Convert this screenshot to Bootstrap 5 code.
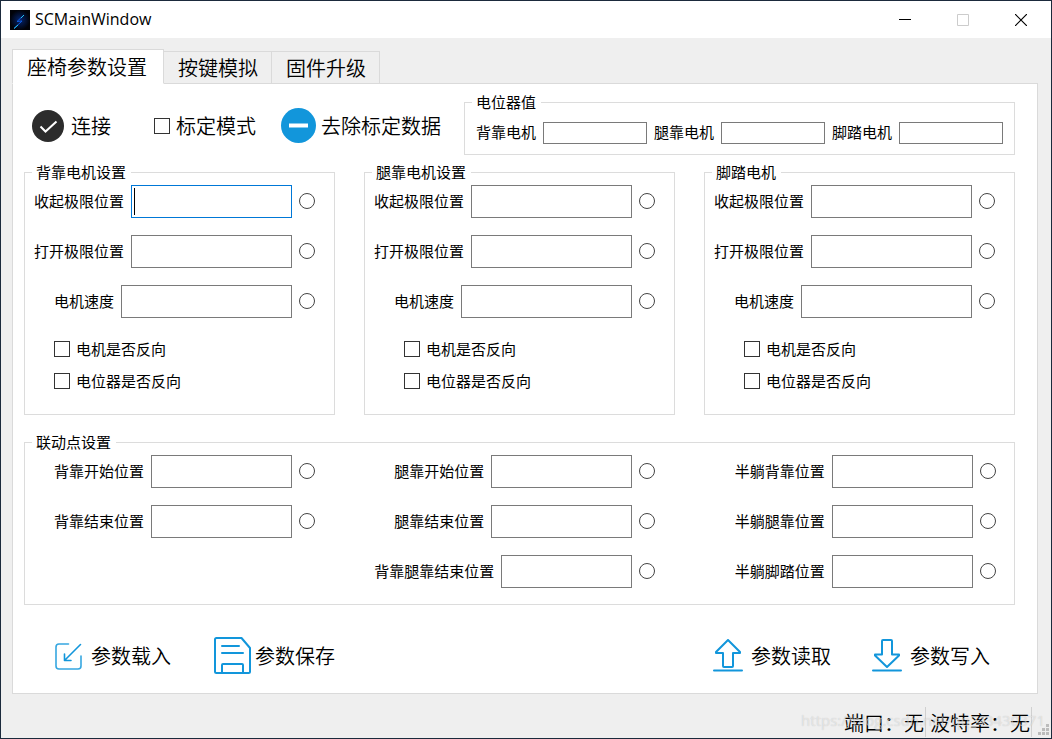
<!DOCTYPE html>
<html lang="zh-CN">
<head>
<meta charset="utf-8">
<meta name="viewport" content="width=device-width, initial-scale=1">
<title>SCMainWindow</title>
<link href="https://cdn.jsdelivr.net/npm/bootstrap@5.3.0/dist/css/bootstrap.min.css" rel="stylesheet">
<style>
  body { font: 400 15px/20px "Noto Sans CJK SC", sans-serif; color: #000; background: #efefef; }
  .app-window { border: 1px solid #1b2a3c; }
  .title-bar { height: 37px; background: #fff; padding-left: 9px; }
  .title-text { font: 400 16px/20px "Open Sans", sans-serif; margin: 0 0 2px 5px; }
  .win-controls { margin-right: 1px; }
  .win-btn { width: 58px; height: 35px; border: 0; background: none; padding: 0; display: flex; align-items: center; justify-content: center; }
  .big-text { font-size: 20px; line-height: 30px; font-weight: 350; }

  .main-area { padding: 11px 13px 0 11px; }
  .nav-tabs { --bs-nav-tabs-border-color: #dadada; --bs-nav-tabs-border-radius: 0; align-items: flex-end; }
  .nav-tabs .nav-link { color: #000; background: #efefef; border: 1px solid #dadada; border-left-width: 0; font-size: 20px; font-weight: 350; line-height: 31px; padding: 0 13px 0 14px; }
  .nav-tabs .nav-link:hover { border-color: #dadada; }
  .nav-tabs .nav-link.active { color: #000; background: #fff; border: 1px solid #dadada; border-bottom-color: #fff; line-height: 33px; padding: 0 16px 0 14px; }
  .panel { background: #fff; border: 1px solid #dadada; border-top: 0; padding: 8px 22px 18px 11px; }

  fieldset.group-box { border: 1px solid #dcdcdc; }
  .group-box legend { float: none; width: auto; font-size: 15px; line-height: 20px; margin: 0 0 0 7px; padding: 0 5px 0 4px; }
  .tool-btn { border: 0; background: none; padding: 0; color: #000; font-weight: 350; display: inline-flex; align-items: center; white-space: nowrap; }

  .top-row { margin-bottom: 7px; }
  .top-tools { padding: 4px 23px 0 8px; }
  .pot-row { padding: 10px 11px 10px 11px; gap: 7px; }
  .text-field { border: 1px solid #7a7a7a; border-radius: 0; padding: 0 4px; min-width: 0; width: 100%; flex: 1 1 0; height: 33px; font-size: 15px; background: #fff; outline: 0; }
  .text-field.short-field { height: 22px; }
  .text-field.current-field { border-color: #0078d7; background: linear-gradient(#000, #000) 2px 2px / 1px 27px no-repeat #fff; }
  .row-label { white-space: nowrap; margin: 0 7px 2px 0; }

  .tri-grid { display: grid; grid-template-columns: repeat(3, minmax(0, 1fr)); gap: 29px; }
  .motor-body { padding: 3px 19px 17px 9px; }
  .field-stack { display: flex; flex-direction: column; gap: 17px; }
  .field-row { display: flex; align-items: center; }
  .inset-row { padding-left: 20px; }
  .check-stack { padding: 15px 0 0 20px; }
  .check-stack.wide-inset { padding-left: 30px; }
  .check-row { height: 32px; display: flex; align-items: center; }
  .form-check-input.box-input, .form-check-input.ring-input { width: 16px; height: 16px; margin: 0; flex: none; border: 1px solid #333; background-color: #fff; border-radius: 0; }
  .form-check-input.ring-input { border-radius: 50%; margin: 0 0 2px 7px; border-color: #444; }
  .check-row label { padding-left: 6px; }
  .link-box { margin-top: 17px; }
  .link-body { padding: 3px 0 16px; }
  .link-col { padding: 0 20px 0 9px; }
  .link-col.mid-col { padding-left: 10px; }
  .link-col.last-col { padding: 0 18px 0 11px; }

  .actions { margin-top: 32px; height: 38px; padding: 0 25px 0 31px; }
  .status-bar { height: 44px; padding: 0 2px 0 0; }
  .status-cell { border-right: 1px solid #d0d0d0; line-height: 28px; font-size: 20px; font-weight: 350; padding: 2px 1px 0 4px; margin-top: 13px; white-space: nowrap; }
  .grip { margin: 30px 0 0 6px; }
  .watermark { position: absolute; right: 6px; bottom: 8px; font: 400 15px/20px "Open Sans", sans-serif; color: rgba(255,255,255,.5); text-shadow: 0 0 1px rgba(0,0,0,.2); pointer-events: none; white-space: nowrap; }
</style>
</head>
<body>
<div class="app-window d-flex flex-column min-vh-100 position-relative">
  <header class="title-bar d-flex align-items-center">
    <svg width="20" height="20" viewBox="0 0 20 20" aria-hidden="true">
      <defs><radialGradient id="glow"><stop offset="0" stop-color="#05246e"/><stop offset="1" stop-color="#010208"/></radialGradient></defs>
      <rect width="20" height="20" fill="url(#glow)"/>
      <path d="M14 5 7 11.500 12 11 4 18.500" fill="none" stroke="#0d5be0" stroke-width="1"/>
      <path d="M14 5 11 8M8 15 4 18.500" stroke="#22c4f5" stroke-width="1"/>
    </svg>
    <span class="title-text">SCMainWindow</span>
    <div class="win-controls ms-auto d-flex">
      <button type="button" class="win-btn" aria-label="最小化"><svg width="12" height="12"><path d="M0 5.500H12" stroke="#000"/></svg></button>
      <button type="button" class="win-btn" aria-label="最大化" disabled><svg width="12" height="12"><path d="M.5.5h11v11H.5z" fill="none" stroke="#ccc"/></svg></button>
      <button type="button" class="win-btn" aria-label="关闭"><svg width="12" height="12"><path d="M0 0 12 12M12 0 0 12" stroke="#000" stroke-width="1.200"/></svg></button>
    </div>
  </header>

  <main class="main-area flex-grow-1 d-flex flex-column">
    <ul class="nav nav-tabs" role="tablist">
      <li class="nav-item"><button type="button" class="nav-link active" role="tab" aria-selected="true">座椅参数设置</button></li>
      <li class="nav-item"><button type="button" class="nav-link" role="tab">按键模拟</button></li>
      <li class="nav-item"><button type="button" class="nav-link" role="tab">固件升级</button></li>
    </ul>

    <div class="panel flex-grow-1">
      <div class="top-row d-flex">
        <div class="top-tools big-text d-flex align-items-center">
          <button type="button" class="tool-btn">
            <svg width="32" height="32" viewBox="0 0 32 32" aria-hidden="true"><circle cx="16" cy="16" r="16" fill="#2c2c2c"/><path d="m8.500 16.500 5 5L24.500 11.500" fill="none" stroke="#fff" stroke-width="2"/></svg>
            <span style="margin-left:7px">连接</span>
          </button>
          <input class="form-check-input box-input" type="checkbox" id="calib" style="margin-left:43px">
          <label for="calib" class="text-nowrap" style="margin:0 25px 0 6px">标定模式</label>
          <button type="button" class="tool-btn">
            <svg width="35" height="35" viewBox="0 0 35 35" aria-hidden="true"><circle cx="17.500" cy="17.500" r="17.500" fill="#1296db"/><path d="M8 17.500H27" stroke="#fff" stroke-width="4"/></svg>
            <span style="margin-left:5px">去除标定数据</span>
          </button>
        </div>
        <fieldset class="group-box flex-grow-1">
          <legend>电位器值</legend>
          <div class="pot-row d-flex">
            <div class="field-row flex-fill"><label class="row-label" for="p1">背靠电机</label><input id="p1" type="text" class="text-field short-field"></div>
            <div class="field-row flex-fill"><label class="row-label" for="p2">腿靠电机</label><input id="p2" type="text" class="text-field short-field"></div>
            <div class="field-row flex-fill"><label class="row-label" for="p3">脚踏电机</label><input id="p3" type="text" class="text-field short-field"></div>
          </div>
        </fieldset>
      </div>

      <div class="tri-grid">
        <fieldset class="group-box">
          <legend>背靠电机设置</legend>
          <div class="motor-body">
            <div class="field-stack">
              <div class="field-row"><label class="row-label" for="a1">收起极限位置</label><input id="a1" type="text" class="text-field current-field"><input type="radio" class="form-check-input ring-input" name="ra1" aria-label="收起极限位置"></div>
              <div class="field-row"><label class="row-label" for="a2">打开极限位置</label><input id="a2" type="text" class="text-field"><input type="radio" class="form-check-input ring-input" name="ra2" aria-label="打开极限位置"></div>
              <div class="field-row inset-row"><label class="row-label" for="a3">电机速度</label><input id="a3" type="text" class="text-field"><input type="radio" class="form-check-input ring-input" name="ra3" aria-label="电机速度"></div>
            </div>
            <div class="check-stack">
              <div class="check-row"><input class="form-check-input box-input" type="checkbox" id="a4"><label for="a4">电机是否反向</label></div>
              <div class="check-row"><input class="form-check-input box-input" type="checkbox" id="a5"><label for="a5">电位器是否反向</label></div>
            </div>
          </div>
        </fieldset>
        <fieldset class="group-box">
          <legend>腿靠电机设置</legend>
          <div class="motor-body">
            <div class="field-stack">
              <div class="field-row"><label class="row-label" for="b1">收起极限位置</label><input id="b1" type="text" class="text-field"><input type="radio" class="form-check-input ring-input" name="rb1" aria-label="收起极限位置"></div>
              <div class="field-row"><label class="row-label" for="b2">打开极限位置</label><input id="b2" type="text" class="text-field"><input type="radio" class="form-check-input ring-input" name="rb2" aria-label="打开极限位置"></div>
              <div class="field-row inset-row"><label class="row-label" for="b3">电机速度</label><input id="b3" type="text" class="text-field"><input type="radio" class="form-check-input ring-input" name="rb3" aria-label="电机速度"></div>
            </div>
            <div class="check-stack wide-inset">
              <div class="check-row"><input class="form-check-input box-input" type="checkbox" id="b4"><label for="b4">电机是否反向</label></div>
              <div class="check-row"><input class="form-check-input box-input" type="checkbox" id="b5"><label for="b5">电位器是否反向</label></div>
            </div>
          </div>
        </fieldset>
        <fieldset class="group-box">
          <legend>脚踏电机</legend>
          <div class="motor-body">
            <div class="field-stack">
              <div class="field-row"><label class="row-label" for="c1">收起极限位置</label><input id="c1" type="text" class="text-field"><input type="radio" class="form-check-input ring-input" name="rc1" aria-label="收起极限位置"></div>
              <div class="field-row"><label class="row-label" for="c2">打开极限位置</label><input id="c2" type="text" class="text-field"><input type="radio" class="form-check-input ring-input" name="rc2" aria-label="打开极限位置"></div>
              <div class="field-row inset-row"><label class="row-label" for="c3">电机速度</label><input id="c3" type="text" class="text-field"><input type="radio" class="form-check-input ring-input" name="rc3" aria-label="电机速度"></div>
            </div>
            <div class="check-stack wide-inset">
              <div class="check-row"><input class="form-check-input box-input" type="checkbox" id="c4"><label for="c4">电机是否反向</label></div>
              <div class="check-row"><input class="form-check-input box-input" type="checkbox" id="c5"><label for="c5">电位器是否反向</label></div>
            </div>
          </div>
        </fieldset>
      </div>

      <fieldset class="group-box link-box">
        <legend>联动点设置</legend>
        <div class="tri-grid link-body">
          <div class="field-stack link-col">
            <div class="field-row inset-row"><label class="row-label" for="d1">背靠开始位置</label><input id="d1" type="text" class="text-field"><input type="radio" class="form-check-input ring-input" name="rd1" aria-label="背靠开始位置"></div>
            <div class="field-row inset-row"><label class="row-label" for="d2">背靠结束位置</label><input id="d2" type="text" class="text-field"><input type="radio" class="form-check-input ring-input" name="rd2" aria-label="背靠结束位置"></div>
          </div>
          <div class="field-stack link-col mid-col">
            <div class="field-row inset-row"><label class="row-label" for="e1">腿靠开始位置</label><input id="e1" type="text" class="text-field"><input type="radio" class="form-check-input ring-input" name="re1" aria-label="腿靠开始位置"></div>
            <div class="field-row inset-row"><label class="row-label" for="e2">腿靠结束位置</label><input id="e2" type="text" class="text-field"><input type="radio" class="form-check-input ring-input" name="re2" aria-label="腿靠结束位置"></div>
            <div class="field-row"><label class="row-label" for="e3">背靠腿靠结束位置</label><input id="e3" type="text" class="text-field"><input type="radio" class="form-check-input ring-input" name="re3" aria-label="背靠腿靠结束位置"></div>
          </div>
          <div class="field-stack link-col last-col">
            <div class="field-row inset-row"><label class="row-label" for="f1">半躺背靠位置</label><input id="f1" type="text" class="text-field"><input type="radio" class="form-check-input ring-input" name="rf1" aria-label="半躺背靠位置"></div>
            <div class="field-row inset-row"><label class="row-label" for="f2">半躺腿靠位置</label><input id="f2" type="text" class="text-field"><input type="radio" class="form-check-input ring-input" name="rf2" aria-label="半躺腿靠位置"></div>
            <div class="field-row inset-row"><label class="row-label" for="f3">半躺脚踏位置</label><input id="f3" type="text" class="text-field"><input type="radio" class="form-check-input ring-input" name="rf3" aria-label="半躺脚踏位置"></div>
          </div>
        </div>
      </fieldset>

      <div class="actions big-text d-flex justify-content-between align-items-center">
        <div class="d-flex align-items-center" style="gap:43px">
          <button type="button" class="tool-btn" style="gap:9px">
            <svg width="27" height="27" viewBox="0 0 27 27" fill="none" stroke="#1296db" stroke-width="1.600" stroke-linecap="round" stroke-linejoin="round" aria-hidden="true"><path d="M13.500 1H4Q1 1 1 4V23Q1 26 4 26H23Q26 26 26 23V13" opacity=".85"/><path d="M25.500 1.500 9.500 17.500M9.500 11V17.500H16"/></svg>
            <span>参数载入</span>
          </button>
          <button type="button" class="tool-btn" style="gap:4px">
            <svg width="37" height="38" viewBox="0 0 37 38" fill="none" stroke="#1296db" stroke-width="2" stroke-linecap="round" stroke-linejoin="round" aria-hidden="true"><path d="M2.500 1H27.500L36 11V34.500Q36 36 34.500 36H2.500Q1 36 1 34.500V2.500Q1 1 2.500 1ZM8 36V28Q8 27 9 27H28Q29 27 29 28V36M8 9H25M8 16H29"/></svg>
            <span>参数保存</span>
          </button>
        </div>
        <div class="d-flex align-items-center" style="gap:41px">
          <button type="button" class="tool-btn" style="gap:8px">
            <svg width="30" height="34" viewBox="0 0 30 34" fill="none" stroke="#1296db" stroke-width="2" stroke-linecap="round" stroke-linejoin="round" aria-hidden="true"><path d="M1 31.500H29M15 1 3 13V14H10V27Q10 28 11 28H19Q20 28 20 27V14H27V13Z"/></svg>
            <span>参数读取</span>
          </button>
          <button type="button" class="tool-btn" style="gap:8px">
            <svg width="30" height="34" viewBox="0 0 30 34" fill="none" stroke="#1296db" stroke-width="2" stroke-linecap="round" stroke-linejoin="round" aria-hidden="true"><path d="M1 31.500H29M15 28 3 16.500V15.500H10V2Q10 1 11 1H19Q20 1 20 2V15.500H27V16.500Z"/></svg>
            <span>参数写入</span>
          </button>
        </div>
      </div>
    </div>
  </main>

  <footer class="status-bar d-flex justify-content-end align-items-start">
    <span class="status-cell">端口：无</span>
    <span class="status-cell">波特率：无</span>
    <svg class="grip" width="11" height="11" fill="#bcbcbc" aria-hidden="true"><path d="M8 0h3v3H8zM4 4h3v3H4zM8 4h3v3H8zM0 8h3v3H0zM4 8h3v3H4zM8 8h3v3H8z"/></svg>
  </footer>
  <div class="watermark">https://blog.csdn.net/qq_43430371</div>
</div>
<script src="https://cdn.jsdelivr.net/npm/bootstrap@5.3.0/dist/js/bootstrap.bundle.min.js"></script>
</body>
</html>
